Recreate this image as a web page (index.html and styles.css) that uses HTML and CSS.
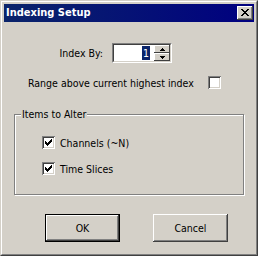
FILE: index.html
```html
<!DOCTYPE html>
<html lang="en">
<head>
    <meta charset="UTF-8">
    <title>Indexing Setup</title>
    <link rel="stylesheet" href="styles.css">
</head>
<body>

    <div class="window">
     <div class="frame">
       <div class="titlebar">
          <span class="title">Indexing Setup</span>
          <button class="close">
             <svg width="8" height="7" viewBox="0 0 8 7" shape-rendering="crispEdges">
                <path d="M0 0h2v1h-2zM6 0h2v1h-2zM1 1h2v1h-2zM5 1h2v1h-2zM2 2h4v1h-4zM3 3h2v1h-2zM2 4h4v1h-4zM1 5h2v1h-2zM5 5h2v1h-2zM0 6h2v1h-2zM6 6h2v1h-2z" fill="#000"/>
             </svg>
          </button>
       </div>

       <div class="client">
          <div class="row-index">
             <label class="index-label">Index By:</label>
             <div class="spin">
                <div class="spin-inner">
                   <div class="spin-field"><span class="sel">1</span></div>
                   <div class="spin-btns">
                      <span class="spin-btn">
                         <svg width="5" height="3" viewBox="0 0 5 3" shape-rendering="crispEdges"><path d="M2 0h1v1h-1zM1 1h3v1h-3zM0 2h5v1h-5z" fill="#000"/></svg>
                      </span>
                      <span class="spin-btn">
                         <svg width="5" height="3" viewBox="0 0 5 3" shape-rendering="crispEdges"><path d="M0 0h5v1h-5zM1 1h3v1h-3zM2 2h1v1h-1z" fill="#000"/></svg>
                      </span>
                   </div>
                </div>
             </div>
          </div>

          <div class="row-range">
             <span class="range-label">Range above current highest index</span>
             <span class="check"></span>
          </div>

          <fieldset class="group">
             <legend>Items to Alter</legend>
             <div class="check-row">
                <span class="check">
                   <svg width="9" height="9" viewBox="0 0 9 9" shape-rendering="crispEdges"><path d="M1 3h1v3h-1zM2 4h1v3h-1zM3 5h1v3h-1zM4 4h1v3h-1zM5 3h1v3h-1zM6 2h1v3h-1zM7 1h1v3h-1z" fill="#000"/></svg>
                </span>
                <span>Channels (~N)</span>
             </div>
             <div class="check-row second">
                <span class="check">
                   <svg width="9" height="9" viewBox="0 0 9 9" shape-rendering="crispEdges"><path d="M1 3h1v3h-1zM2 4h1v3h-1zM3 5h1v3h-1zM4 4h1v3h-1zM5 3h1v3h-1zM6 2h1v3h-1zM7 1h1v3h-1z" fill="#000"/></svg>
                </span>
                <span>Time Slices</span>
             </div>
          </fieldset>

          <div class="buttons">
             <button class="btn default">OK</button>
             <button class="btn">Cancel</button>
          </div>
       </div>
     </div>
    </div>

</body>
</html>
```

FILE: styles.css
```css
*{
    margin: 0;
    padding: 0;
}

body{
    background-color: #d4d0c8;
    font-family: "DejaVu Sans Condensed", "Liberation Sans", sans-serif;
    font-size: 10.5px;
    color: #000;
}

.window{
    width: 258px;
    height: 256px;
    box-sizing: border-box;
    border: 1px solid;
    border-color: #d4d0c8 #404040 #404040 #d4d0c8;
    background-color: #d4d0c8;
}

.frame{
    height: 100%;
    box-sizing: border-box;
    border: 1px solid;
    border-color: #fff #808080 #808080 #fff;
    padding: 2px;
    display: flex;
    flex-direction: column;
}

.titlebar{
    height: 18px;
    flex: none;
    display: flex;
    align-items: center;
    justify-content: space-between;
    padding: 0 1px 0 2px;
    background: linear-gradient(to right, #0a246a, #000080);
}

.title{
    color: #fff;
    font-weight: bold;
    font-size: 11px;
    line-height: 14px;
}

.close{
    width: 16px;
    height: 14px;
    border: none;
    background-color: #d4d0c8;
    box-shadow: inset -1px -1px #404040, inset 1px 1px #fff, inset -2px -2px #808080;
    display: flex;
    align-items: center;
    justify-content: center;
    padding: 0 1px 1px 0;
}

.client{
    flex: 1;
    padding-top: 21px;
}

.row-index{
    display: flex;
    align-items: center;
    height: 20px;
}

.index-label{
    margin-left: 50px;
    width: 49px;
    text-align: right;
    margin-right: 9px;
}

.spin{
    width: 60px;
    height: 20px;
    box-sizing: border-box;
    border: 1px solid;
    border-color: #808080 #fff #fff #808080;
}

.spin-inner{
    height: 100%;
    box-sizing: border-box;
    border: 1px solid;
    border-color: #404040 #d4d0c8 #d4d0c8 #404040;
    display: flex;
    background-color: #fff;
}

.spin-field{
    flex: 1;
    display: flex;
    align-items: center;
    justify-content: flex-end;
    padding-right: 4px;
}

.sel{
    background-color: #0a246a;
    color: #fff;
    line-height: 14px;
    padding: 0 1px;
}

.spin-btns{
    width: 16px;
    display: flex;
    flex-direction: column;
}

.spin-btn{
    flex: 1;
    display: flex;
    align-items: center;
    justify-content: center;
    background-color: #d4d0c8;
    box-shadow: inset -1px -1px #404040, inset 1px 1px #fff;
}

.row-range{
    display: flex;
    align-items: center;
    height: 13px;
    margin-top: 13px;
    padding-left: 24px;
}

.range-label{
    width: 180px;
    white-space: nowrap;
}

.check{
    width: 13px;
    height: 13px;
    box-sizing: border-box;
    flex: none;
    background-color: #fff;
    box-shadow: inset 1px 1px #808080, inset -1px -1px #fff, inset 2px 2px #404040, inset -2px -2px #d4d0c8;
    display: flex;
    align-items: center;
    justify-content: center;
}

.group{
    margin: 19px 0 0 10px;
    width: 230px;
    box-sizing: border-box;
    border: 1px solid #808080;
    box-shadow: inset 1px 1px #fff, 1px 1px #fff;
    padding: 15px 0 19px 6px;
}

.group legend{
    padding: 0 1px;
    line-height: 13px;
    background-color: #d4d0c8;
}

.check-row{
    display: flex;
    align-items: center;
    height: 13px;
    margin-left: 21px;
    gap: 5px;
}

.check-row.second{
    margin-top: 13px;
}

.buttons{
    display: flex;
    gap: 33px;
    padding-left: 41px;
    margin-top: 19px;
}

.btn{
    width: 75px;
    height: 28px;
    border: none;
    background-color: #d4d0c8;
    font-family: inherit;
    font-size: 10.5px;
    color: #000;
    box-shadow: inset -1px -1px #404040, inset 1px 1px #fff, inset -2px -2px #808080;
}

.btn.default{
    border: 1px solid #000;
}
```
